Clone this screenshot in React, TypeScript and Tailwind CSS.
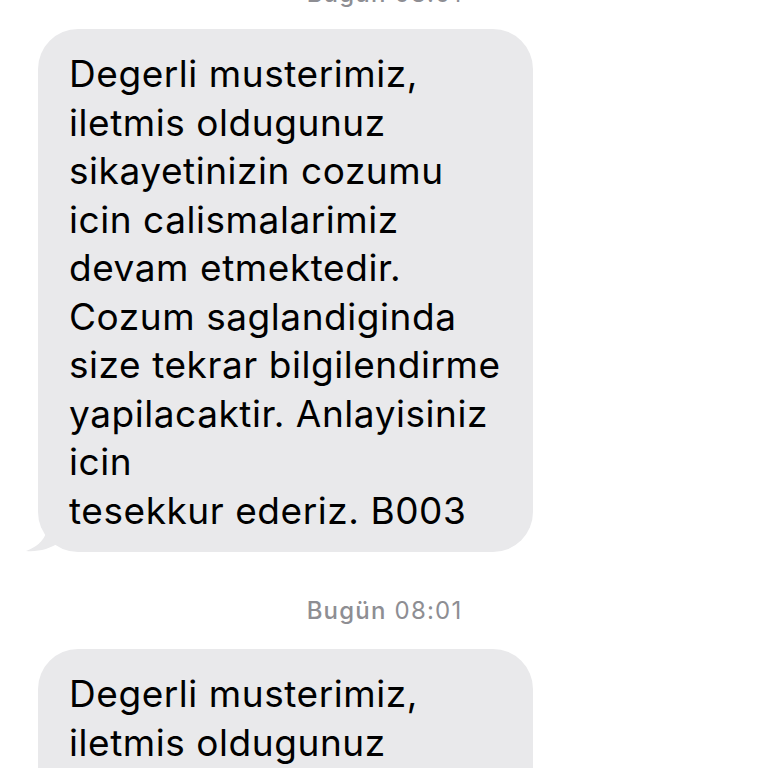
import React from "react";

const first = [
  "Degerli musterimiz,",
  "iletmis oldugunuz",
  "sikayetinizin cozumu",
  "icin calismalarimiz",
  "devam etmektedir.",
  "Cozum saglandiginda",
  "size tekrar bilgilendirme",
  "yapilacaktir. Anlayisiniz",
  "icin",
  "tesekkur ederiz. B003",
];

const second = ["Degerli musterimiz,", "iletmis oldugunuz", "sikayetinizin cozumu"];

function Stamp() {
  return (
    <div className="text-center text-[24px] leading-[28px] tracking-[0.05em] text-[#8e8e93] pl-[1px]">
      <span className="font-medium">Bugün</span> <span>08:01</span>
    </div>
  );
}

function Bubble({ lines, tail }: { lines: string[]; tail?: boolean }) {
  return (
    <div className="relative w-[495px]">
      <div className="bg-[#e9e9eb] rounded-[40px] pl-[31px] pr-[20px] pt-[21px] pb-[17px] text-[37px] leading-[48.5px] tracking-[0.015em] text-black">
        {lines.map((l, i) => (
          <div key={i} className="whitespace-nowrap">
            {l}
          </div>
        ))}
      </div>
      {tail && (
        <svg className="absolute left-[-12px] bottom-0" width="40" height="34" viewBox="0 0 40 34">
          <path d="M22 0 C22 16 18 26 0 33 C12 34 24 31 34 24 L40 0 Z" fill="#e9e9eb" />
        </svg>
      )}
    </div>
  );
}

export default function App() {
  return (
    <div
      className="w-[768px] h-[768px] overflow-hidden bg-white"
      style={{ fontFamily: "Inter, 'Noto Sans', sans-serif" }}
    >
      <div className="-mt-[20px] flex flex-col">
        <Stamp />
        <div className="pl-[38px] mt-[21px]">
          <Bubble lines={first} tail />
        </div>
        <div className="mt-[45px]">
          <Stamp />
        </div>
        <div className="pl-[38px] mt-[24px]">
          <Bubble lines={second} />
        </div>
      </div>
    </div>
  );
}
